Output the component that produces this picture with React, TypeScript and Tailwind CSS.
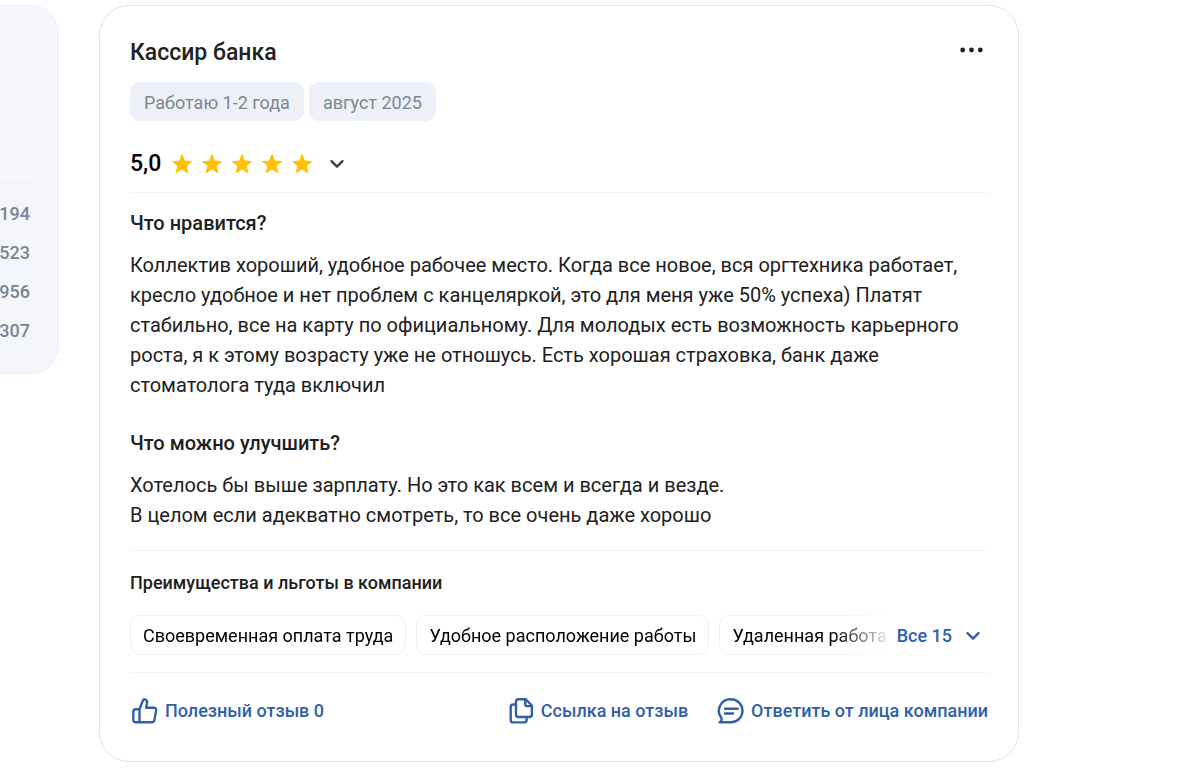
import type { ReactNode } from "react";

const BENEFITS = ["Своевременная оплата труда", "Удобное расположение работы", "Удаленная работа"];

const COUNTERS = ["194", "523", "956", "307"];

function Star() {
    return (
        <svg viewBox="0 0 20 20" className="h-5 w-5" fill="#ffc107" aria-hidden="true">
            <path
                d="M10 .6l2.5 6.5 7 .4-5.4 4.4 1.8 6.9-5.9-3.8-5.9 3.8 1.8-6.9L.5 7.5l7-.4z"
                stroke="#ffc107"
                strokeWidth="1"
                strokeLinejoin="round"
            />
        </svg>
    );
}

function Chevron() {
    return (
        <svg
            viewBox="0 0 16 16"
            className="h-4 w-4"
            fill="none"
            stroke="currentColor"
            strokeWidth="2.4"
            strokeLinecap="round"
            strokeLinejoin="round"
            aria-hidden="true"
        >
            <path d="M2.5 5.2L8 10.7l5.5-5.5" />
        </svg>
    );
}

function ActionIcon({ children }: { children: ReactNode }) {
    return (
        <svg
            viewBox="0 0 30 30"
            className="h-[30px] w-[30px] shrink-0"
            fill="none"
            stroke="currentColor"
            strokeWidth="2.4"
            strokeLinecap="round"
            strokeLinejoin="round"
            aria-hidden="true"
        >
            {children}
        </svg>
    );
}

function ReviewSection({ title, children }: { title: string; children: ReactNode }) {
    return (
        <section>
            <h3 className="text-xl leading-[30px] font-medium">{title}</h3>
            <p className="mt-3 text-xl leading-[30px]">{children}</p>
        </section>
    );
}

export default function App() {
    return (
        <div className="flex min-h-screen items-start bg-white font-['Roboto',sans-serif] text-[#212121]">
            {/* Sidebar */}
            <aside className="mt-1 w-[59px] shrink-0 rounded-r-[30px] border-r border-[#eceef4] bg-[#f5f6fb] pr-7 pb-[25px]">
                <div className="h-[174px] border-b border-white" />
                <ul className="mt-4 text-lg font-medium text-[#758599]">
                    {COUNTERS.map((count) => (
                        <li key={count} className="flex h-[39px] items-center justify-end">
                            {count}
                        </li>
                    ))}
                </ul>
            </aside>

            {/* Review card */}
            <main className="mt-[5px] mr-4 ml-10 min-w-0 max-w-[920px] flex-1 rounded-[30px] border border-[#dfe3eb] px-[30px] pt-[30px] pb-[34px]">
                <header className="flex items-center justify-between">
                    <h2 className="text-[23px] leading-[34px] font-medium">Кассир банка</h2>
                    <button type="button" aria-label="Меню" className="flex h-8 w-8 items-center justify-center">
                        <svg viewBox="0 0 24 6" className="mb-1.5 h-[6px] w-6" fill="currentColor" aria-hidden="true">
                            <circle cx="2.7" cy="3" r="2.4" />
                            <circle cx="11.5" cy="3" r="2.4" />
                            <circle cx="20.3" cy="3" r="2.4" />
                        </svg>
                    </button>
                </header>

                <div className="mt-3 flex gap-[5px] text-lg text-[#7b8794]">
                    <span className="flex h-[39px] items-center rounded-[10px] bg-[#edf0f8] px-[14px] pt-0.5">
                        Работаю 1-2 года
                    </span>
                    <span className="flex h-[39px] items-center rounded-[10px] bg-[#edf0f8] px-[14px] pt-0.5">
                        август 2025
                    </span>
                </div>

                <div className="mt-[29px] flex h-7 items-center text-black">
                    <span className="text-[23px] leading-7 font-medium">5,0</span>
                    <span className="ml-[11px] flex gap-[10px]">
                        {[1, 2, 3, 4, 5].map((n) => (
                            <Star key={n} />
                        ))}
                    </span>
                    <button type="button" aria-label="Показать оценки" className="ml-[17px] text-[#424242]">
                        <Chevron />
                    </button>
                </div>

                <div className="mt-[14px] border-y border-[#f3f4fa] pt-[15px] pb-5">
                    <ReviewSection title="Что нравится?">
                        Коллектив хороший, удобное рабочее место. Когда все новое, вся оргтехника работает, кресло
                        удобное и нет проблем с канцеляркой, это для меня уже 50% успеха) Платят стабильно, все на
                        карту по официальному. Для молодых есть возможность карьерного роста, я к этому возрасту уже
                        не отношусь. Есть хорошая страховка, банк даже стоматолога туда включил
                    </ReviewSection>
                    <div className="mt-7">
                        <ReviewSection title="Что можно улучшить?">
                            Хотелось бы выше зарплату. Но это как всем и всегда и везде.
                            <br />В целом если адекватно смотреть, то все очень даже хорошо
                        </ReviewSection>
                    </div>
                </div>

                {/* Benefits */}
                <section className="mt-[17px] border-b border-[#f3f4fa] pb-[17px]">
                    <h3 className="text-lg leading-[30px] font-medium">Преимущества и льготы в компании</h3>
                    <div className="mt-[17px] flex items-center text-lg">
                        <ul className="flex min-w-0 flex-1 gap-[10px] overflow-hidden mask-r-from-[calc(100%-60px)] text-black">
                            {BENEFITS.map((benefit) => (
                                <li
                                    key={benefit}
                                    className="flex h-10 shrink-0 items-center rounded-[10px] border border-[#eef0f7] px-3 pt-0.5 whitespace-nowrap"
                                >
                                    {benefit}
                                </li>
                            ))}
                        </ul>
                        <button
                            type="button"
                            className="ml-1 flex shrink-0 items-center gap-[13px] pt-0.5 pr-[7px] font-medium text-[#315fa8]"
                        >
                            Все 15
                            <Chevron />
                        </button>
                    </div>
                </section>

                {/* Actions */}
                <footer className="mt-[22px] flex h-8 items-center text-lg font-medium text-[#315fa8]">
                    <button type="button" className="mr-auto flex items-center gap-[5px]">
                        <ActionIcon>
                            <path d="M9.5 13.2l3.4-8.7c.4-1 1.1-1.4 2-1.1 1.6.5 2.4 1.8 2.1 3.5l-.8 4.8h7.6c1.6 0 2.6 1.2 2.3 2.7l-1.7 9.7c-.2 1.3-1.1 2.1-2.5 2.1H5.8c-1.6 0-2.5-.9-2.5-2.5v-8c0-1.6.9-2.5 2.5-2.5zM9.5 13.2v13" />
                        </ActionIcon>
                        Полезный отзыв 0
                    </button>
                    <button type="button" className="flex items-center gap-[5px]">
                        <ActionIcon>
                            <path d="M12.5 3.3h7.2l6.2 6.2v9c0 1.6-.9 2.5-2.5 2.5H12.5c-1.6 0-2.5-.9-2.5-2.5V5.8c0-1.6.9-2.5 2.5-2.5z" />
                            <path d="M19.2 3.8v4.4c0 1.2.7 1.9 1.9 1.9h4.3" />
                            <path d="M9.6 8.5H7.2c-1.6 0-2.5.9-2.5 2.5v12.9c0 1.6.9 2.5 2.5 2.5h10.9c1.6 0 2.5-.9 2.5-2.5v-2.5" />
                        </ActionIcon>
                        Ссылка на отзыв
                    </button>
                    <button type="button" className="ml-7 flex items-center gap-[5px]">
                        <ActionIcon>
                            <path d="M15 3.3a11.5 11.5 0 1 1 0 23H3.6c2.2-1.2 2.6-2.2 1.7-4.5A11.5 11.5 0 0 1 15 3.3z" />
                            <path d="M9 12.8h12.8M9 17.5h8" />
                        </ActionIcon>
                        Ответить от лица компании
                    </button>
                </footer>
            </main>
        </div>
    );
}
